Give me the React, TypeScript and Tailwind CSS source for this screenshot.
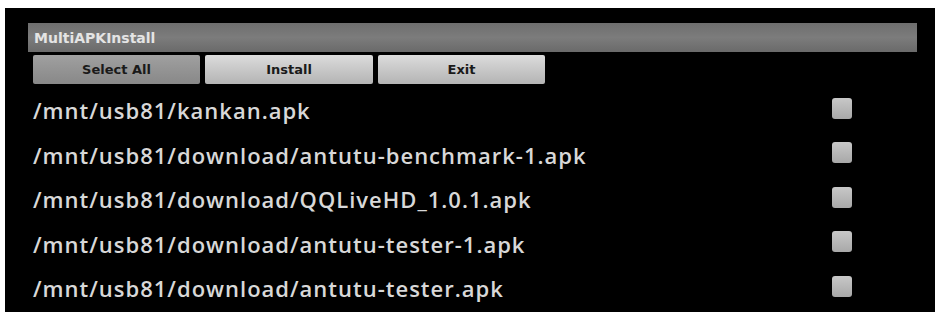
import React from "react";

const files = [
  "/mnt/usb81/kankan.apk",
  "/mnt/usb81/download/antutu-benchmark-1.apk",
  "/mnt/usb81/download/QQLiveHD_1.0.1.apk",
  "/mnt/usb81/download/antutu-tester-1.apk",
  "/mnt/usb81/download/antutu-tester.apk",
];

export default function App() {
  return (
    <div className="w-[940px] h-[312px] bg-white pt-[8px] pl-[5px] pr-[5px] overflow-hidden" style={{ fontFamily: '"DejaVu Sans", sans-serif' }}>
      <div className="h-[304px] bg-black pt-[15px] pl-[23px] pr-[18px]">
        <div className="h-[29px] bg-gradient-to-b from-[#6e6e6e] via-[#7c7c7c] to-[#6a6a6a] flex items-center pl-[6px] text-[14px] font-bold text-[#e4e4e4] leading-none">
          MultiAPKInstall
        </div>
        <div className="flex gap-[5px] pl-[5px] pt-[3px]">
          <button className="w-[167px] h-[29px] bg-gradient-to-b from-[#a0a0a0] to-[#888888] text-[13px] font-bold text-[#1a1a1a] rounded-[2px]">
            Select All
          </button>
          <button className="w-[168px] h-[29px] bg-gradient-to-b from-[#dcdcdc] to-[#b4b4b4] text-[13px] font-bold text-[#1a1a1a] rounded-[2px]">
            Install
          </button>
          <button className="w-[167px] h-[29px] bg-gradient-to-b from-[#dcdcdc] to-[#b4b4b4] text-[13px] font-bold text-[#1a1a1a] rounded-[2px]">
            Exit
          </button>
        </div>
        <div className="flex flex-col pt-[4px]">
          {files.map((f) => (
            <div key={f} className="h-[44.5px] flex items-center justify-between pl-[5px]">
              <span className="text-[22px] font-semibold text-[#d8d8d8] tracking-[1px] leading-none" style={{ fontFamily: '"Open Sans", sans-serif' }}>{f}</span>
              <span className="w-[20px] h-[21px] rounded-[3px] bg-gradient-to-b from-[#c8c8c8] to-[#a8a8a8] mr-[65px] -translate-y-[2px]" />
            </div>
          ))}
        </div>
      </div>
    </div>
  );
}
